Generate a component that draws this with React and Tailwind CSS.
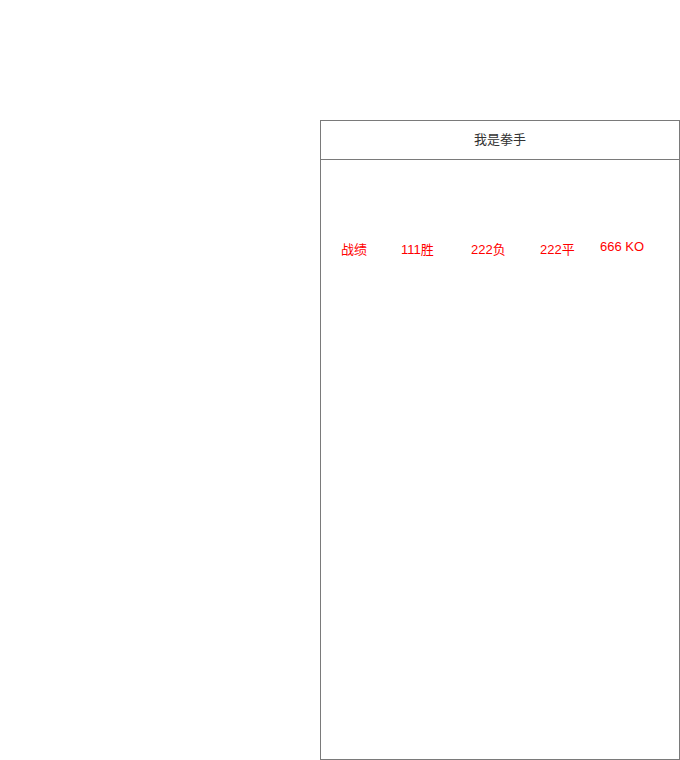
import React from 'react'

const stats = [
    { label: '战绩', width: 'w-[60px]' },
    { label: '111胜', width: 'w-[70px]' },
    { label: '222负', width: 'w-[69px]' },
    { label: '222平', width: 'w-[60px]' },
]

const App = () => {
    return (
        <div className="w-[680px] h-[760px] bg-white pt-[120px] pl-[320px] font-['Liberation_Sans','Noto_Sans_CJK_SC',sans-serif]">
            <div className="w-[360px] h-[640px] border border-[#7a7a7a] flex flex-col">
                <div className="h-[39px] border-b border-[#7a7a7a] flex items-center justify-center text-[13px] text-[#333]">
                    我是拳手
                </div>
                <div className="mt-[80px] pl-[20px] flex items-start text-[13px] leading-[20px] text-[#ff0000]">
                    {stats.map((item) => (
                        <span key={item.label} className={item.width}>{item.label}</span>
                    ))}
                    <span className="-mt-[3px]">666 KO</span>
                </div>
            </div>
        </div>
    )
}

export default App
